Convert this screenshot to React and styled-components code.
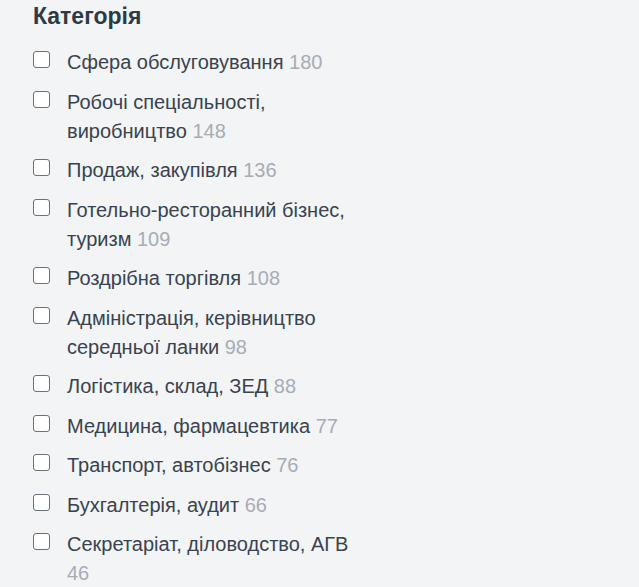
import React, { useState } from "react";
import styled, { createGlobalStyle } from "styled-components";

const GlobalStyle = createGlobalStyle`
    html, body {
        margin: 0;
        padding: 0;
        background: #f3f4f6;
    }
    body {
        font-family: "Liberation Sans", Arial, sans-serif;
    }
`;

const Panel = styled.aside`
    width: 326px;
    padding: 0 0 0 33px;
`;

const Title = styled.h3`
    margin: 0 0 16px;
    font-size: 23px;
    font-weight: 700;
    line-height: 32px;
    color: #2c3a47;
`;

const List = styled.ul`
    list-style: none;
    margin: 0;
    padding: 0;
    display: flex;
    flex-direction: column;
    gap: 10.5px;
`;

const Item = styled.li`
    display: flex;
    align-items: flex-start;
    gap: 17px;
`;

const Box = styled.input.attrs({ type: "checkbox" })`
    appearance: none;
    flex: none;
    box-sizing: border-box;
    width: 17px;
    height: 17px;
    margin: 3px 0 0 0;
    border: 1.5px solid #6b7178;
    border-radius: 3px;
    background: #fff;
    cursor: pointer;

    &:checked {
        background: #3b82f6;
        border-color: #3b82f6;
    }
`;

const Label = styled.label`
    font-size: 20px;
    line-height: 29px;
    color: #38434f;
    cursor: pointer;
`;

const Count = styled.span`
    color: #a6adb5;
`;

const categories = [
    { id: 1, name: "Сфера обслуговування", count: 180 },
    { id: 2, name: "Робочі спеціальності, виробництво", count: 148 },
    { id: 3, name: "Продаж, закупівля", count: 136 },
    { id: 4, name: "Готельно-ресторанний бізнес, туризм", count: 109 },
    { id: 5, name: "Роздрібна торгівля", count: 108 },
    { id: 6, name: "Адміністрація, керівництво середньої ланки", count: 98 },
    { id: 7, name: "Логістика, склад, ЗЕД", count: 88 },
    { id: 8, name: "Медицина, фармацевтика", count: 77 },
    { id: 9, name: "Транспорт, автобізнес", count: 76 },
    { id: 10, name: "Бухгалтерія, аудит", count: 66 },
    { id: 11, name: "Секретаріат, діловодство, АГВ", count: 46 },
];

const App = () => {
    const [checked, setChecked] = useState({});

    const toggle = (id) => setChecked((prev) => ({ ...prev, [id]: !prev[id] }));

    return (
        <>
            <GlobalStyle />
            <Panel>
                <Title>Категорія</Title>
                <List>
                    {categories.map((c) => (
                        <Item key={c.id}>
                            <Box
                                id={`cat-${c.id}`}
                                checked={!!checked[c.id]}
                                onChange={() => toggle(c.id)}
                            />
                            <Label htmlFor={`cat-${c.id}`}>
                                {c.name} <Count>{c.count}</Count>
                            </Label>
                        </Item>
                    ))}
                </List>
            </Panel>
        </>
    );
};

export default App;
